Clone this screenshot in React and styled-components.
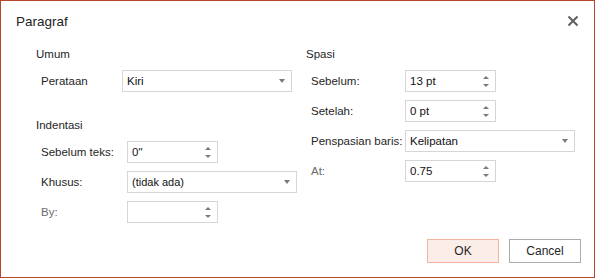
import React from 'react';
import styled, { createGlobalStyle } from 'styled-components';

const Global = createGlobalStyle`
  html, body {
    margin: 0;
    padding: 0;
    background: #fff;
  }
  * {
    box-sizing: border-box;
  }
`

const Window = styled.div`
  width: 595px;
  height: 278px;
  border: 1px solid #b7472a;
  background: #fff;
  display: flex;
  flex-direction: column;
  font-family: "Liberation Sans", Arial, sans-serif;
  font-size: 11.5px;
  color: #262626;
`
const Header = styled.div`
  height: 45px;
  flex-shrink: 0;
  display: flex;
  align-items: flex-start;
  justify-content: space-between;
  padding: 13px 15px 0 15px;
`
const Title = styled.h1`
  margin: 0;
  font-size: 13.5px;
  font-weight: normal;
  color: #222;
`
const Close = styled.button`
  border: none;
  background: none;
  padding: 0;
  margin-top: 1px;
  width: 12px;
  height: 12px;
  display: flex;
  cursor: pointer;
`
const Body = styled.div`
  flex: 1;
  display: flex;
  min-height: 0;
`
const Column = styled.div`
  width: ${p => p.width}px;
  padding-left: ${p => p.pad}px;
  display: flex;
  flex-direction: column;
  gap: 25px;
`
const Section = styled.div`
  display: flex;
  flex-direction: column;
  gap: 8px;
`
const Heading = styled.div`
  height: 16px;
  line-height: 16px;
  color: #262626;
`
const Row = styled.div`
  display: grid;
  grid-template-columns: ${p => p.label}px auto;
  align-items: center;
  padding-left: 5px;
`
const Label = styled.label`
  color: ${p => (p.dim ? '#6b6b6b' : '#262626')};
  white-space: nowrap;
`
const Field = styled.div`
  width: ${p => p.width}px;
  height: 22px;
  border: 1px solid #d6d6d6;
  background: #fff;
  display: flex;
  align-items: center;
  justify-content: space-between;
  padding: 0 6px 0 4px;
  color: #111;
`
const Value = styled.span`
  font-size: ${p => (p.small ? '11px' : '11.5px')};
`
const Arrows = styled.div`
  display: flex;
  flex-direction: column;
  gap: 5px;
`
const Tri = styled.div`
  width: 0;
  height: 0;
  border-left: ${p => p.size}px solid transparent;
  border-right: ${p => p.size}px solid transparent;
  ${p => (p.up ? 'border-bottom' : 'border-top')}: ${p => p.h}px solid #7a7a7a;
`
const Footer = styled.div`
  height: 38px;
  flex-shrink: 0;
  display: flex;
  justify-content: flex-end;
  align-items: flex-start;
  gap: 10px;
  padding-right: 13px;
`
const Button = styled.button`
  width: 72px;
  height: 24px;
  font-family: inherit;
  font-size: 12px;
  color: #262626;
  background: ${p => (p.primary ? '#fbede7' : '#fff')};
  border: 1px solid ${p => (p.primary ? '#f3b69c' : '#ababab')};
  padding: 0;
`

function Spinner({ width = 91, value }) {
  return (
    <Field width={width}>
      <Value>{value}</Value>
      <Arrows>
        <Tri up size={3} h={3} />
        <Tri size={3} h={3} />
      </Arrows>
    </Field>
  );
}

function Dropdown({ width = 170, value, small }) {
  return (
    <Field width={width}>
      <Value small={small}>{value}</Value>
      <Tri size={3.5} h={4} />
    </Field>
  );
}

function App() {
  return (
    <>
      <Global />
      <Window>
        <Header>
          <Title>Paragraf</Title>
          <Close aria-label="Tutup">
            <svg width="12" height="12" viewBox="0 0 12 12">
              <path d="M1.5 1.5 L10.5 10.5 M10.5 1.5 L1.5 10.5" stroke="#5f5f5f" strokeWidth="2" />
            </svg>
          </Close>
        </Header>
        <Body>
          <Column width={305} pad={35}>
            <Section>
              <Heading>Umum</Heading>
              <Row label={81}>
                <Label>Perataan</Label>
                <Dropdown value="Kiri" />
              </Row>
            </Section>
            <Section>
              <Heading>Indentasi</Heading>
              <Row label={86}>
                <Label>Sebelum teks:</Label>
                <Spinner value={'0"'} />
              </Row>
              <Row label={86}>
                <Label>Khusus:</Label>
                <Dropdown value="(tidak ada)" small />
              </Row>
              <Row label={86}>
                <Label dim>By:</Label>
                <Spinner value="" />
              </Row>
            </Section>
          </Column>
          <Column width={288} pad={0}>
            <Section>
              <Heading>Spasi</Heading>
              <Row label={94}>
                <Label>Sebelum:</Label>
                <Spinner value="13 pt" />
              </Row>
              <Row label={94}>
                <Label>Setelah:</Label>
                <Spinner value="0 pt" />
              </Row>
              <Row label={94}>
                <Label>Penspasian baris:</Label>
                <Dropdown value="Kelipatan" />
              </Row>
              <Row label={94}>
                <Label dim>At:</Label>
                <Spinner value="0.75" />
              </Row>
            </Section>
          </Column>
        </Body>
        <Footer>
          <Button primary>OK</Button>
          <Button>Cancel</Button>
        </Footer>
      </Window>
    </>
  );
}

export default App;
